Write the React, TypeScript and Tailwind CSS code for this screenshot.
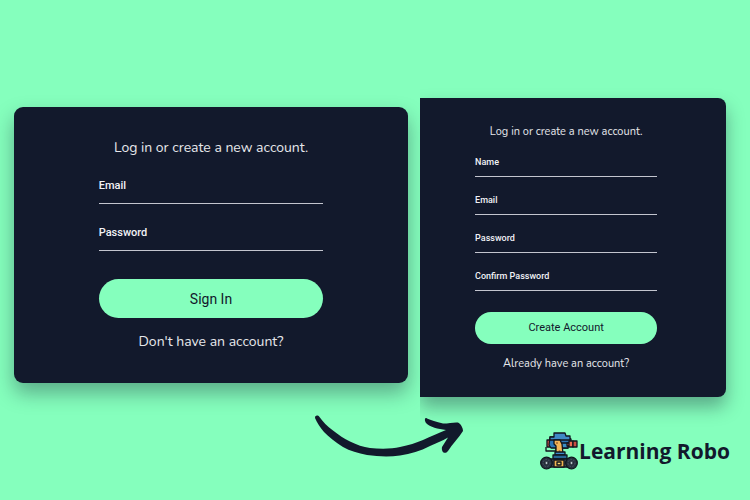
import { useId } from "react";

type FieldProps = { label: string; type?: string; compact?: boolean };

function Field({ label, type = "text", compact = false }: FieldProps) {
  const id = useId();
  return (
    <div className={compact ? "mb-2 grid" : "mb-3 grid"}>
      <input
        id={id}
        type={type}
        placeholder=" "
        className={
          "peer col-start-1 row-start-1 w-full border-b border-[#c3c5cf] bg-transparent text-white outline-none " +
          (compact ? "h-[30px] text-[9px]" : "h-[35px] text-[11px]")
        }
      />
      <label
        htmlFor={id}
        className={
          "pointer-events-none col-start-1 row-start-1 self-start font-medium text-[#f1f2f6] transition-transform peer-focus:-translate-y-3 peer-[:not(:placeholder-shown)]:-translate-y-3 " +
          (compact ? "pt-[7px] text-[9px] leading-4" : "pt-[7px] text-[11px] leading-5")
        }
      >
        {label}
      </label>
    </div>
  );
}

function SignIn() {
  return (
    <form
      onSubmit={(e) => e.preventDefault()}
      className="rounded-[9px] bg-[#12192c] px-[21.5%] pt-[30px] pb-[30px] shadow-[0_10px_20px_rgba(18,25,44,0.36)]"
    >
      <h2 className="mb-[10px] text-center font-['Nunito','Open_Sans',sans-serif] text-sm leading-[22px] whitespace-nowrap text-[#e6e7eb]">
        Log in or create a new account.
      </h2>
      <Field label="Email" type="email" />
      <Field label="Password" type="password" />
      <button
        type="submit"
        className="mt-4 h-[39px] w-full rounded-full bg-[#85ffbd] text-sm text-[#12192c]"
      >
        Sign In
      </button>
      <a
        href="#register"
        className="mt-[13px] block text-center font-['Nunito','Open_Sans',sans-serif] text-sm leading-[22px] whitespace-nowrap text-[#e6e7eb]"
      >
        Don't have an account?
      </a>
    </form>
  );
}

function Register() {
  return (
    <form
      id="register"
      onSubmit={(e) => e.preventDefault()}
      className="rounded-r-[8px] bg-[#12192c] pt-[25px] pr-[22.5%] pb-6 pl-[18%] shadow-[0_10px_18px_rgba(18,25,44,0.36)] [clip-path:inset(-40px_-40px_-40px_0)]"
    >
      <h2 className="mb-[6px] text-center font-['Nunito','Open_Sans',sans-serif] text-[11px] leading-[18px] whitespace-nowrap text-[#e6e7eb]">
        Log in or create a new account.
      </h2>
      <Field label="Name" compact />
      <Field label="Email" type="email" compact />
      <Field label="Password" type="password" compact />
      <Field label="Confirm Password" type="password" compact />
      <button
        type="submit"
        className="mt-[13px] h-8 w-full rounded-full bg-[#85ffbd] text-[11px] text-[#12192c]"
      >
        Create Account
      </button>
      <a
        href="#signin"
        className="mt-[11px] block text-center font-['Nunito','Open_Sans',sans-serif] text-[11px] leading-[18px] whitespace-nowrap text-[#e6e7eb]"
      >
        Already have an account?
      </a>
    </form>
  );
}

function Arrow() {
  return (
    <svg viewBox="0 0 150 42" className="h-[42px] w-[150px] shrink-0" fill="#12192c" aria-hidden="true">
      <path d="M0 3C0 0 3 0 4.500 2C8 7 12 11 18 15.500C24 20 29 24 35 26.500C42 30 48 32 55 33C65 34 77 34 85 32C94 30 101 28 108 25C116 21 124 18 131 15C123 14 115 12 111 8C109 5 110 2 112 3.500C116 5 121 7 128 8.500C134 8.500 139 7 143 7.500C146 9 148 13 148 16C144 23 137 29 133 36C130 40 126 37 127 32L133 22.500C127 26 121 28 115 31C105 36 96 39 85 40.500C74 42 63 41.500 52 40C43 38 35 36 28 32C20 27 14 22 9 17C5 12 2 8 0 3Z" />
    </svg>
  );
}

function Robot() {
  return (
    <svg viewBox="0 0 38 38" className="h-[38px] w-[38px] shrink-0" stroke="#10151e" strokeWidth="1.3" strokeLinejoin="round" aria-hidden="true">
      <path d="M6 15v4h10v-3" fill="#85ffbd" />
      <path d="M7 8h4v7H7z" fill="#df594d" />
      <path d="M10 5h18l3 2v3l-3 3v3H11l-2-3z" fill="#2e78b7" />
      <path d="M14 1h11l1 3h4v4H10V5h4z" fill="#3f88c5" />
      <path d="M19 11h9v5h-9z" fill="#3b8fc4" />
      <path d="M27 11h3v3h-3z" fill="#df594d" />
      <path d="M29 9h4v6h-4z" fill="#ed6b52" />
      <path d="M33 9h4v6h-4z" fill="#c84d43" />
      <path d="M14 8h6l2 4 1 10h-7V14l-2-2z" fill="#f4b557" />
      <circle cx="17" cy="11" r="1" fill="#a66a35" stroke="none" />
      <circle cx="19.500" cy="19" r="1" fill="#a66a35" stroke="none" />
      <path d="M15 20h10v3H15z" fill="#3f88c5" />
      <path d="M13 23h14v4H13z" fill="#286594" />
      <path d="M8 27h22v8H8z" fill="#49525f" />
      <path d="M14 28h10v7H14z" fill="#f2b551" />
      <path d="M17 30h4v3h-4z" fill="#f8d477" />
      <circle cx="6.500" cy="31" r="5.800" fill="#28303e" />
      <circle cx="31.500" cy="31" r="5.800" fill="#28303e" />
      <circle cx="6.500" cy="31" r="3.500" fill="none" stroke="#4b5665" strokeWidth="1" strokeDasharray="1.500 1.500" />
      <circle cx="31.500" cy="31" r="3.500" fill="none" stroke="#4b5665" strokeWidth="1" strokeDasharray="1.500 1.500" />
      <circle cx="6.500" cy="31" r="1.400" fill="#c4d1d7" strokeWidth=".6" />
      <circle cx="31.500" cy="31" r="1.400" fill="#c4d1d7" strokeWidth=".6" />
    </svg>
  );
}

export default function App() {
  return (
    <div className="min-h-screen overflow-hidden bg-[#85ffbd] font-['Roboto','Liberation_Sans',sans-serif]">
      <main className="grid grid-cols-[394fr_306fr] items-start gap-3 pt-[98px] pr-6 pl-[14px]">
        <section id="signin" aria-label="Sign in" className="pt-[9px]">
          <SignIn />
        </section>
        <section aria-label="Create account">
          <Register />
        </section>
      </main>
      <footer className="flex items-start justify-between pt-[18px] pr-5 pl-[42%]">
        <Arrow />
        <div className="flex items-center gap-px pt-[17px]">
          <Robot />
          <span className="font-['Open_Sans',sans-serif] text-[21px] leading-7 font-bold whitespace-nowrap text-[#12192c]">
            Learning Robo
          </span>
        </div>
      </footer>
    </div>
  );
}
